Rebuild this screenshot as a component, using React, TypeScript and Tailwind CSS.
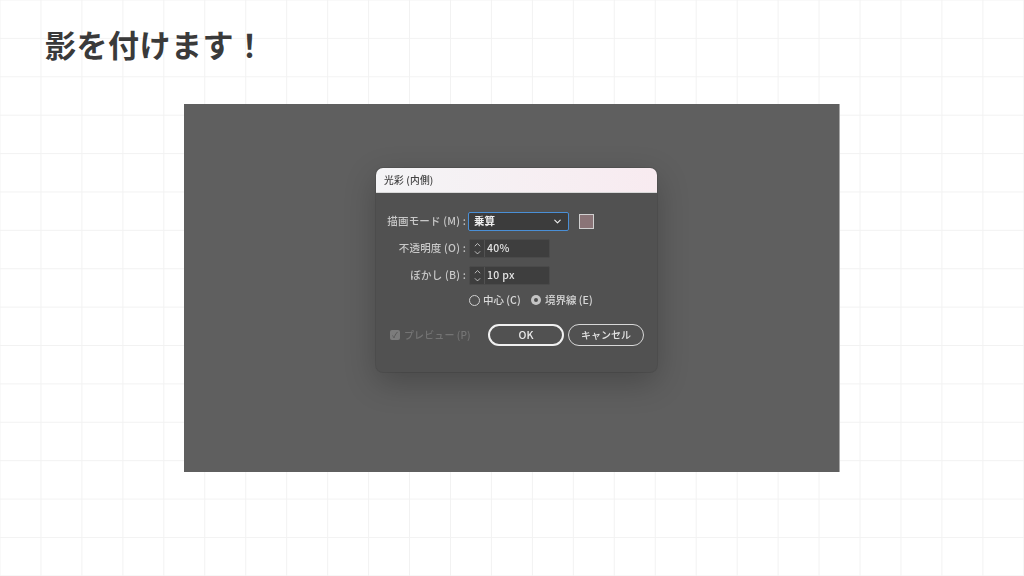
import React from 'react';
import { ChevronDown, ChevronUp } from 'lucide-react';

const jp = "font-['Noto_Sans_CJK_JP','Noto_Sans',sans-serif]";

const Label = ({ children }: { children: React.ReactNode }) => (
  <div className="w-[92px] shrink-0 pr-[2px] text-right text-[10.5px] font-medium leading-none tracking-[0.2px] text-[#c8c8c8]">{children}</div>
);

const SpinField = ({ label, value }: { label: string; value: string }) => (
  <div className="flex h-[19px] items-center">
    <Label>{label}</Label>
    <div className="ml-[1px] flex h-[19px] w-[81px] rounded-[2px] border border-[#4a4a4a] bg-[#3e3e3e]">
      <div className="flex w-[15px] shrink-0 flex-col items-center justify-center border-r border-[#525252] text-[#ececec]">
        <ChevronUp size={11} strokeWidth={1.8} className="-mb-[1px]" />
        <ChevronDown size={11} strokeWidth={1.8} className="-mt-[1px]" />
      </div>
      <div className="flex items-center pl-[2px] text-[10.5px] font-medium leading-none tracking-[0.3px] text-[#e4e4e4]">{value}</div>
    </div>
  </div>
);

export default function App() {
  return (
    <div
      className={`${jp} h-[576px] w-[1024px] overflow-hidden bg-white bg-[linear-gradient(to_right,#f2f2f2_1px,transparent_1px),linear-gradient(to_bottom,#f2f2f2_1px,transparent_1px)] bg-[size:40.96px_38.4px] bg-[position:-0.5px_-0.5px]`}
    >
      <div className="flex h-[104px] items-start pl-[45px] pt-[22px]">
        <h1 className="text-[31px] font-bold leading-[44px] tracking-[0.5px] text-[#3a3a3a]">影を付けます！</h1>
      </div>

      {/* 暗いキャンバス */}
      <div className="ml-[184px] h-[368px] w-[655px] bg-[#5f5f5f] pl-[192px] pt-[64px] shadow-[1px_0_0_#a8a8a8]">
        <div className="h-[204px] w-[281px] overflow-hidden rounded-[7px] bg-[#515151] shadow-[0_10px_32px_rgba(0,0,0,0.24),0_0_0_1px_#565656] blur-[0.25px]">
          <div className="flex h-[25px] items-center border-b border-[#d8d8d8] bg-gradient-to-r from-[#f4f4f6] to-[#f8ebf0] pl-[8px] text-[9.75px] font-medium tracking-[0.2px] text-[#444444]">
            光彩 (内側)
          </div>

          <div className="flex flex-col gap-[8px] pt-[19px]">
            <div className="flex h-[19px] items-center">
              <Label>描画モード (M) :</Label>
              <div className="flex h-[19px] w-[101px] items-center justify-between rounded-[2px] border border-[#4a8fd6] bg-[#3c3c3c] px-[5px] text-[10.5px] font-bold leading-none text-[#eeeeee]">
                <span>乗算</span>
                <ChevronDown size={11} strokeWidth={2.4} className="text-[#f0f0f0]" />
              </div>
              <div className="ml-[10px] h-[15px] w-[15px] border border-[#d0d0d0] bg-[#8a7477]" />
            </div>
            <SpinField label="不透明度 (O) :" value="40%" />
            <SpinField label="ぼかし (B) :" value="10 px" />
          </div>

          <div className="ml-[93px] mt-[9px] flex h-[12px] items-center text-[10.5px] font-medium leading-none text-[#d8d8d8]">
            <span className="h-[11px] w-[11px] rounded-full border border-[#d0d0d0]" />
            <span className="ml-[3px] w-[38px] whitespace-nowrap">中心 (C)</span>
            <span className="ml-[10px] flex h-[10px] w-[10px] items-center justify-center rounded-full bg-[#c4c4c4]">
              <span className="h-[4px] w-[4px] rounded-full bg-[#505050]" />
            </span>
            <span className="ml-[4px]">境界線 (E)</span>
          </div>

          <div className="mt-[18px] flex h-[22px] items-center pl-[14px]">
            <span className="flex h-[10px] w-[10px] items-center justify-center rounded-[2px] bg-[#7c7c7c] text-[8px] leading-none text-[#505050]">✓</span>
            <span className="ml-[4px] w-[84px] text-[10px] font-medium leading-none tracking-[0.1px] text-[#747474]">プレビュー (P)</span>
            <div className="flex h-[22px] w-[76px] items-center justify-center rounded-full border-2 border-[#f0f0f0] text-[10.5px] font-medium leading-none text-[#ececec]">OK</div>
            <div className="ml-[4px] flex h-[22px] w-[76px] items-center justify-center rounded-full border border-[#d8d8d8] text-[10px] font-medium leading-none text-[#e4e4e4]">キャンセル</div>
          </div>
        </div>
      </div>
    </div>
  );
}
